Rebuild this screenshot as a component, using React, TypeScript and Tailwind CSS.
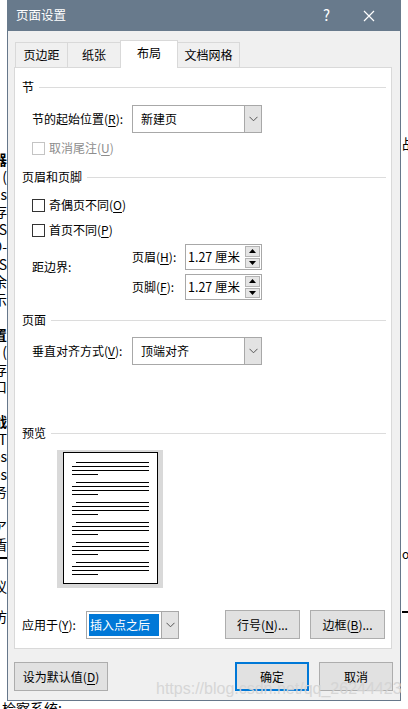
import React from 'react';

// underlined mnemonic inside "(X)"
function Mn({ label, k, tail = '' }: { label: string; k: string; tail?: string }) {
  return (
    <span className="whitespace-nowrap">
      {label}(<span className="underline underline-offset-2">{k}</span>){tail}
    </span>
  );
}

function SectionHead({ title }: { title: string }) {
  return (
    <div className="flex items-center h-[20px] gap-[5px]">
      <span className="leading-none">{title}</span>
      <div className="flex-1 h-px bg-[#dcdcdc]" />
    </div>
  );
}

function Chevron() {
  return (
    <svg width="9" height="6" viewBox="0 0 9 6" className="text-[#555]">
      <path d="M0.5 0.8 L4.5 4.8 L8.5 0.8" fill="none" stroke="currentColor" strokeWidth="1" />
    </svg>
  );
}

function Dropdown({ value, width, selected }: { value: string; width: string; selected?: boolean }) {
  return (
    <div className={`flex h-[28px] border border-[#a8a8a8] bg-white ${width}`}>
      <div className="flex-1 flex items-center px-[2px]">
        {selected ? (
          <span className="bg-[#0078d7] text-white h-[22px] flex items-center px-[1px] w-[70px]">{value}</span>
        ) : (
          <span className="pl-[6px]">{value}</span>
        )}
      </div>
      <div className="w-[17px] bg-[#e3e3e3] border-l border-[#a8a8a8] flex items-center justify-center">
        <Chevron />
      </div>
    </div>
  );
}

function Spinner({ value }: { value: string }) {
  return (
    <div className="flex h-[26px] w-[77px] border border-[#a8a8a8] bg-white">
      <div className="flex-1 flex items-center pl-[2px] text-[12.5px]">{value}</div>
      <div className="w-[16px] flex flex-col py-px pr-px gap-px">
        <div className="flex-1 bg-[#e5e5e5] border border-[#b4b4b4] flex items-center justify-center">
          <svg width="7" height="4" viewBox="0 0 7 4">
            <path d="M3.5 0 L7 4 L0 4 Z" fill="#000" />
          </svg>
        </div>
        <div className="flex-1 bg-[#e5e5e5] border border-[#b4b4b4] flex items-center justify-center">
          <svg width="7" height="4" viewBox="0 0 7 4">
            <path d="M0 0 L7 0 L3.5 4 Z" fill="#000" />
          </svg>
        </div>
      </div>
    </div>
  );
}

function Check({ children, disabled }: { children: React.ReactNode; disabled?: boolean }) {
  return (
    <div className={`flex items-center h-[20px] gap-[4px] ${disabled ? 'text-[#8d8d8d]' : 'text-black'}`}>
      <div className={`w-[13px] h-[13px] border bg-white ${disabled ? 'border-[#c4c4c4]' : 'border-[#333]'}`} />
      {children}
    </div>
  );
}

function Btn({ children, width, focused }: { children: React.ReactNode; width: string; focused?: boolean }) {
  return (
    <div
      className={`h-[29px] ${width} flex items-center justify-center bg-[#e1e1e1] ${
        focused ? 'border-2 border-[#0078d7]' : 'border border-[#adadad]'
      }`}
    >
      {children}
    </div>
  );
}

function PreviewPage() {
  const groups = [0, 1, 2, 3, 4, 5];
  return (
    <div className="ml-[35px] w-[106px] h-[138px] bg-[#d9d9d9] pt-[2px] pl-[6px]">
      <div className="w-[95px] h-[132px] bg-white border border-black pt-[9px] px-[8px] flex flex-col gap-[7px]">
        {groups.map((g) => (
          <div key={g} className="flex flex-col gap-[3px]">
            <div className="h-px bg-black ml-[4px]" />
            <div className="h-px bg-black" />
            <div className="h-px bg-black" />
            <div className="h-px bg-black w-[26px]" />
          </div>
        ))}
      </div>
    </div>
  );
}

const leftText = ['e。', '器', '(', 's', '存', 'S', 'O-', 'S', '余', '示', '', '置', '(', '存', 'E口', '', '战', 'T', 'os', 'os', '务', '', 'ア', '盾'];

export default function App() {
  return (
    <div className="relative w-[408px] h-[709px] bg-white overflow-hidden font-['Noto_Sans_CJK_SC',sans-serif] text-[12px] text-black">
      <div className="flex h-[701px]">
        {/* document behind, left edge */}
        <div className="w-[7px] shrink-0 overflow-hidden flex flex-col text-[14px] leading-[18px] pt-[132px]">
          {leftText.map((t, i) => (
            <div key={i} className={`h-[17.5px] flex justify-end whitespace-nowrap ${t === '器' || t === '置' || t === '战' ? 'font-bold' : ''}`}>
              {t}
            </div>
          ))}
          <div className="mt-[5px] h-[2px] bg-black w-full" />
          <div className="mt-[18px] h-[18px] flex justify-end whitespace-nowrap text-[14px]">议</div>
          <div className="mt-[12px] h-[18px] flex justify-end whitespace-nowrap text-[14px]">仿</div>
          <div className="h-[18px] flex justify-end whitespace-nowrap text-[14px]">亻</div>
        </div>

        {/* dialog */}
        <div className="w-[394px] shrink-0 flex flex-col bg-[#f0f0f0] border-x border-b border-[#66778a]">
          <div className="h-[31px] bg-[#687a8c] flex items-center text-white -mx-px px-[9px]">
            <span className="flex-1 text-[12.5px]">页面设置</span>
            <span className="text-[15px] mr-[33px]">?</span>
            <svg width="12" height="12" viewBox="0 0 12 12" className="mr-[17px]">
              <path d="M1 1 L11 11 M11 1 L1 11" stroke="#fff" strokeWidth="1.2" />
            </svg>
          </div>

          {/* tabs */}
          <div className="flex items-end h-[27px] mt-[9px] ml-[7px] relative z-10">
            <div className="w-[53px] h-[25px] border-t border-x border-[#d9d9d9] flex items-center justify-center">页边距</div>
            <div className="w-[54px] h-[25px] -ml-px border-t border-x border-[#d9d9d9] flex items-center justify-center">纸张</div>
            <div className="w-[58px] h-[28px] -ml-px -mb-px bg-white border-t border-x border-[#d9d9d9] flex items-center justify-center pb-[3px] relative z-10">
              布局
            </div>
            <div className="w-[63px] h-[25px] -ml-px border-t border-x border-[#d9d9d9] flex items-center justify-center">文档网格</div>
          </div>

          {/* tab panel */}
          <div className="ml-[6px] w-[378px] h-[582px] bg-white border border-[#d9d9d9] pl-[7px] pr-[5px] pt-[9px] flex flex-col">
            <SectionHead title="节" />
            <div className="flex items-center mt-[8px] pl-[10px]">
              <div className="w-[100px]">
                <Mn label="节的起始位置" k="R" tail=":" />
              </div>
              <Dropdown value="新建页" width="w-[130px]" />
            </div>
            <div className="mt-[5px] pl-[10px]">
              <Check disabled>
                <Mn label="取消尾注" k="U" />
              </Check>
            </div>

            <div className="mt-[9px]">
              <SectionHead title="页眉和页脚" />
            </div>
            <div className="mt-[8px] pl-[10px]">
              <Check>
                <Mn label="奇偶页不同" k="O" />
              </Check>
            </div>
            <div className="mt-[5px] pl-[10px]">
              <Check>
                <Mn label="首页不同" k="P" />
              </Check>
            </div>
            <div className="mt-[4px] pl-[10px] flex">
              <div className="w-[100px] pt-[14px]">距边界:</div>
              <div className="flex flex-col gap-[4px]">
                <div className="flex items-center">
                  <div className="w-[53px]">
                    <Mn label="页眉" k="H" tail=":" />
                  </div>
                  <Spinner value="1.27 厘米" />
                </div>
                <div className="flex items-center">
                  <div className="w-[53px]">
                    <Mn label="页脚" k="F" tail=":" />
                  </div>
                  <Spinner value="1.27 厘米" />
                </div>
              </div>
            </div>

            <div className="mt-[10px]">
              <SectionHead title="页面" />
            </div>
            <div className="flex items-center mt-[7px] pl-[10px]">
              <div className="w-[100px]">
                <Mn label="垂直对齐方式" k="V" tail=":" />
              </div>
              <Dropdown value="顶端对齐" width="w-[130px]" />
            </div>

            <div className="mt-[58px]">
              <SectionHead title="预览" />
            </div>
            <div className="mt-[7px]">
              <PreviewPage />
            </div>

            <div className="flex items-center mt-[22px]">
              <div className="w-[64px]">
                <Mn label="应用于" k="Y" tail=":" />
              </div>
              <Dropdown value="插入点之后" width="w-[93px]" selected />
              <div className="flex-1" />
              <Btn width="w-[75px]">
                <Mn label="行号" k="N" tail="..." />
              </Btn>
              <div className="w-[10px]" />
              <Btn width="w-[75px]">
                <Mn label="边框" k="B" tail="..." />
              </Btn>
              <div className="w-px" />
            </div>
          </div>

          {/* bottom buttons */}
          <div className="flex mt-[13px] pl-[6px] pr-[7px]">
            <Btn width="w-[94px]">
              <Mn label="设为默认值" k="D" />
            </Btn>
            <div className="flex-1" />
            <Btn width="w-[74px]" focused>
              确定
            </Btn>
            <div className="w-[10px]" />
            <Btn width="w-[74px]">取消</Btn>
          </div>
        </div>

        {/* document behind, right edge */}
        <div className="flex-1 overflow-hidden flex flex-col text-[14px] pt-[133px] pl-[1px]">
          <div className="h-[18px] whitespace-nowrap">战</div>
          <div className="mt-[394px] h-[14px] whitespace-nowrap text-[12px]">o</div>
          <div className="mt-[52px] h-[2px] bg-black" />
        </div>
      </div>

      {/* document behind, below */}
      <div className="h-[8px] overflow-hidden pl-[2px] text-[14px] leading-[14px] whitespace-nowrap">检察系统:</div>

      {/* watermark */}
      <div className="absolute left-[156px] top-[677px] font-['Liberation_Sans',sans-serif] text-[16px] text-[#d4d4d4] opacity-90 whitespace-nowrap pointer-events-none">
        https://blog.csdn.net/qq_26244423
      </div>
    </div>
  );
}
